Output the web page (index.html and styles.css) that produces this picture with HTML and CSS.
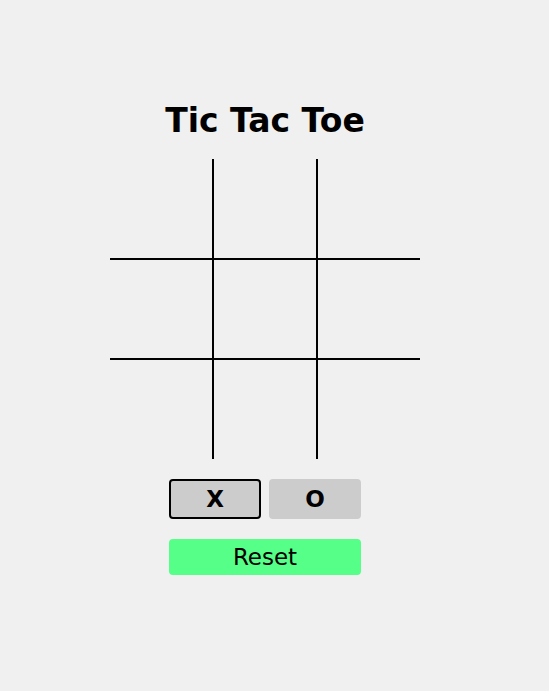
FILE: index.html
```html
<!DOCTYPE html>
<html>
<head>
<meta charset="utf-8">
<link rel="stylesheet" href="styles.css">
</head>
<body>
<main class="game">
  <h1 class="title">Tic Tac Toe</h1>
  <div class="board">
    <div class="cell"></div><div class="cell"></div><div class="cell"></div>
    <div class="cell"></div><div class="cell"></div><div class="cell"></div>
    <div class="cell"></div><div class="cell"></div><div class="cell"></div>
  </div>
  <div class="players">
    <button class="player active">X</button>
    <button class="player">O</button>
  </div>
  <button class="reset">Reset</button>
</main>
</body>
</html>
```
FILE: styles.css
```css
html, body {
  margin: 0;
  padding: 0;
  background: #f0f0f0;
}
body {
  font-family: "DejaVu Sans", Verdana, sans-serif;
  color: #000;
}
.game {
  width: 530px;
  display: flex;
  flex-direction: column;
  align-items: center;
  padding-top: 102px;
}
.title {
  margin: 0;
  font-size: 33px;
  line-height: 38px;
  font-weight: bold;
}
.board {
  margin-top: 19px;
  width: 310px;
  height: 300px;
  display: grid;
  grid-template-columns: 104px 104px 102px;
  grid-template-rows: 101px 100px 99px;
}
.cell {
  box-sizing: border-box;
}
.cell:nth-child(3n+1), .cell:nth-child(3n+2) {
  border-right: 2px solid #000;
}
.cell:nth-child(-n+6) {
  border-bottom: 2px solid #000;
}
.players {
  margin-top: 20px;
  display: flex;
  gap: 8px;
}
.player {
  box-sizing: border-box;
  width: 92px;
  height: 40px;
  border: none;
  border-radius: 4px;
  background: #cccccc;
  font-family: "DejaVu Sans", Verdana, sans-serif;
  font-size: 23px;
  font-weight: bold;
  color: #000;
  padding: 0;
}
.player.active {
  border: 2px solid #000;
}
.reset {
  margin-top: 20px;
  width: 192px;
  height: 36px;
  border: none;
  border-radius: 4px;
  background: #55ff88;
  font-family: "DejaVu Sans", Verdana, sans-serif;
  font-size: 23px;
  color: #000;
  padding: 0;
}
```
